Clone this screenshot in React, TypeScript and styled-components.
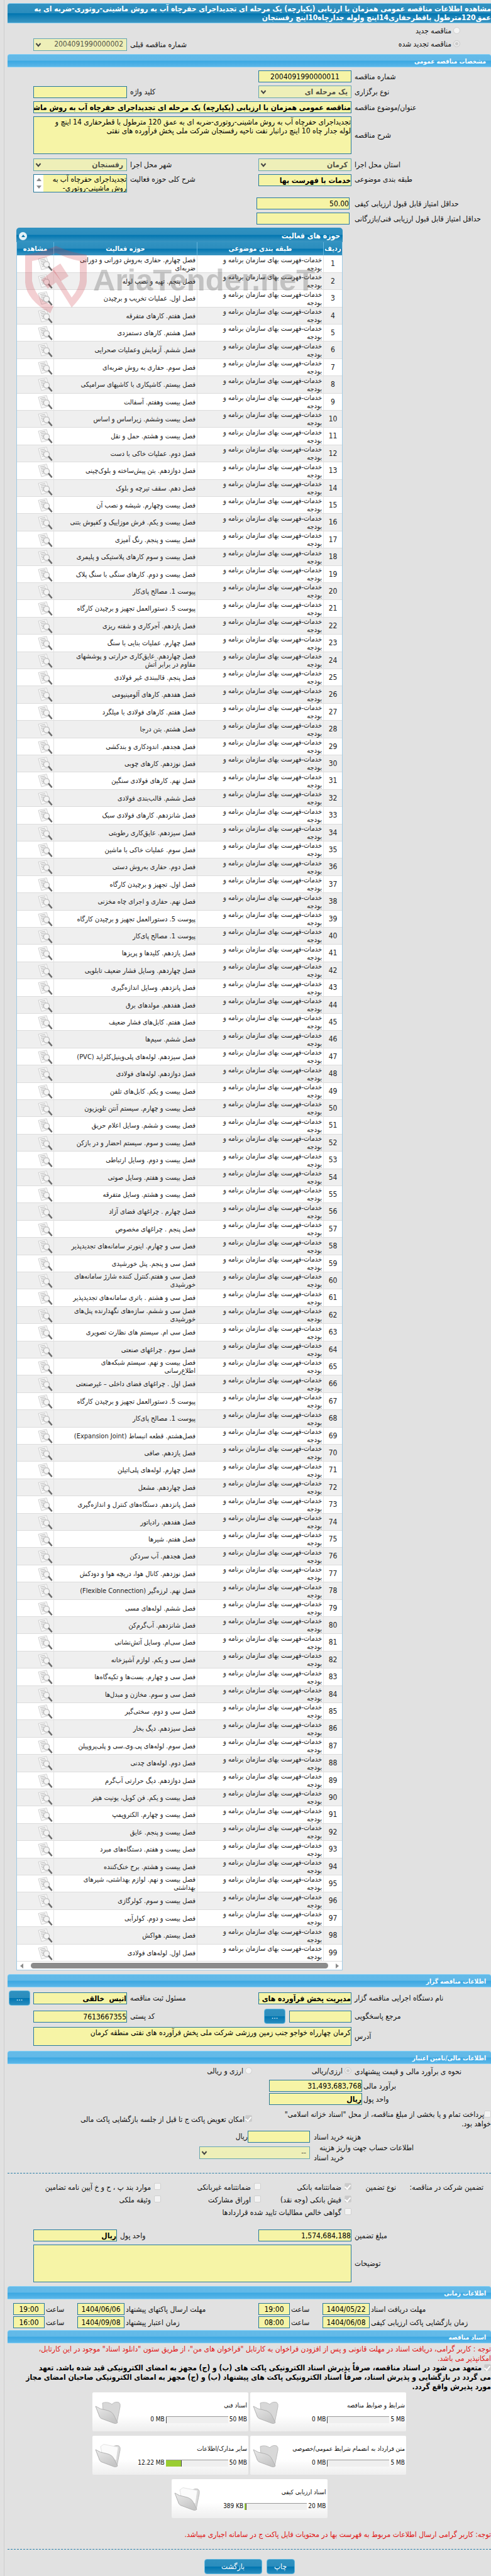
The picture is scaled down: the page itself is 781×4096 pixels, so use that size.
import React from 'react';
import styled, { createGlobalStyle } from 'styled-components';

const GlobalStyle = createGlobalStyle`
  * { box-sizing: border-box; }
  body {
    margin: 0;
    background: #e1e1e1;
    color: #111;
    font-family: "DejaVu Sans Condensed", "DejaVu Sans", sans-serif;
    font-size: 12px;
    line-height: 15px;
    overflow-x: hidden;
  }
  input, select, textarea, button { font: inherit; margin: 0; }
`;

const Page = styled.main`
  margin-left: 6px;
  padding-left: 5px;
  border-left: 1px solid #cdcdcd;
  padding-top: 5px;
  padding-bottom: 4px;
`;

const darkBar = 'linear-gradient(#3192c1 0, #2c8dbd 48%, #0176b1 52%, #3c96c2 100%)';

const PageTitle = styled.h1`
  margin: 0;
  padding: 1px 0;
  min-height: 31px;
  font-size: 12px;
  line-height: 14px;
  font-weight: bold;
  color: #fff;
  white-space: nowrap;
  background: ${darkBar};
  border-top: 1px solid #7cc9ee;
  border-bottom: 1px solid #7cc9ee;
  border-radius: 4px 0 0 0;
`;

const SectionTitle = styled.h2<{ $gap?: number }>`
  margin: ${p => p.$gap ?? 0}px 0 0;
  padding: 2px 8px 0;
  height: 21px;
  font-size: 10px;
  line-height: 18px;
  font-weight: bold;
  color: #fff;
  background: linear-gradient(#63bae8 0, #62b9e8 48%, #3ba8e2 52%, #5bb6e8 100%);
  border-top: 1px solid #85d0f6;
  border-bottom: 1px solid #85d0f6;
  border-radius: 4px 4px 0 0;
`;

const Stack = styled.div<{ $top?: number; $gap?: number }>`
  display: flex;
  flex-direction: column;
  margin-top: ${p => p.$top ?? 0}px;
  gap: ${p => p.$gap ?? 5}px;
`;

const FormRow = styled.div<{ $top?: number; $h?: number; $align?: string }>`
  display: grid;
  grid-template-columns: minmax(0, 217fr) 148px minmax(0, 199fr) 149px 36px;
  column-gap: 5px;
  align-items: ${p => p.$align ?? 'center'};
  min-height: ${p => p.$h ?? 19}px;
  margin-top: ${p => p.$top ?? 0}px;
`;

const AmountRow = styled(FormRow)`
  grid-template-columns: minmax(0, 217fr) 148px minmax(0, 215fr) 133px 36px;
`;

const EstimateRow = styled(FormRow)`
  grid-template-columns: minmax(0, 203fr) 148px minmax(0, 414fr);
  column-gap: 2px;
`;

const CurrencyRow = styled(FormRow)`
  grid-template-columns: minmax(0, 217fr) 153px minmax(0, 389fr);
`;

const TreasuryRow = styled(FormRow)`
  grid-template-columns: 375px minmax(0, 1fr);
`;

const CostRow = styled(FormRow)`
  grid-template-columns: minmax(0, 282fr) 176px minmax(0, 299fr);
  column-gap: 6px;
`;

const TimeRow = styled(FormRow)`
  grid-template-columns: minmax(0, 191fr) 75px 48px 50px minmax(0, 209fr) 75px 48px 50px 7px;
  column-gap: 2px;
`;

const Label = styled.label`
  text-align: left;
  padding-top: 1px;
`;

const TwoLineLabel = styled(Label)`
  justify-self: end;
  width: 159px;
  text-align: right;
`;

const fieldColors = `
  border: 1px solid #27799b;
  border-radius: 0;
  background: #f6f4a6;
  color: #000;
  outline: 0;
`;

const Field = styled.input<{ $bold?: boolean; $center?: boolean; $inset?: number }>`
  ${fieldColors}
  width: 100%;
  min-width: 0;
  height: 19px;
  padding: 1px 0 0;
  font-weight: ${p => (p.$bold ? 'bold' : 'normal')};
  text-align: ${p => (p.$center ? 'center' : 'right')};
  margin-right: ${p => p.$inset ?? 0}px;
`;

const WideField = styled(Field)`
  grid-column: 2 / 5;
`;

const Area = styled.textarea<{ $h: number; $wide?: boolean }>`
  ${fieldColors}
  display: block;
  width: 100%;
  min-width: 0;
  height: ${p => p.$h}px;
  padding: 1px 0 0;
  line-height: 14px;
  resize: none;
  overflow: hidden;
  grid-column: ${p => (p.$wide ? '2 / 5' : 'auto')};
`;

const ScrollBox = styled.div`
  ${fieldColors}
  display: flex;
  height: 29px;
  textarea { border: 0; height: 27px; flex: 1; padding: 0; }
`;

const Rail = styled.span`
  width: 15px;
  background: #fff;
  display: flex;
  flex-direction: column;
  align-items: center;
  justify-content: space-between;
  padding: 5px 0;
  i { border: 4px solid transparent; border-top: 0; border-bottom: 5px solid #8a8a8a; }
  i + i { border-top: 5px solid #8a8a8a; border-bottom: 0; }
`;

const SelectWrap = styled.span`
  position: relative;
  display: block;
  svg { position: absolute; left: 3px; top: 7px; }
`;

const SelectBox = styled.select`
  appearance: none;
  display: block;
  width: 100%;
  height: 20px;
  padding: 0 5px;
  border: 1px solid #67a5b1;
  border-radius: 0;
  background: #eeefb8;
  color: #55554a;
  opacity: 1;
  font-weight: bold;
  &.plain { font-weight: normal; }
`;

function Select({ id, value, plain }: { id: string; value: string; plain?: boolean }) {
  return (
    <SelectWrap>
      <SelectBox id={id} disabled className={plain ? 'plain' : ''}>
        <option>{value}</option>
      </SelectBox>
      <svg width="10" height="7" viewBox="0 0 10 7" fill="none" stroke="#444" strokeWidth="2">
        <path d="M1.5 1 5 5.2 8.5 1" />
      </svg>
    </SelectWrap>
  );
}

const Radio = styled.input.attrs({ type: 'radio', disabled: true })`
  appearance: none;
  flex: none;
  width: 11px;
  height: 11px;
  border-radius: 50%;
  border: 1px solid #cfcfcf;
  background: #f3f3f3;
  &:checked { background: #c9c9c9; box-shadow: inset 0 0 0 2px #ececec; }
`;

const Check = styled.input.attrs({ type: 'checkbox', disabled: true })`
  appearance: none;
  flex: none;
  display: inline-block;
  width: 11px;
  height: 11px;
  border-radius: 2px;
  border: 1px solid #d0d0d0;
  background: #f3f3f3;
  vertical-align: -1px;
  &:checked { background: #cacaca; }
  &:checked::after {
    content: '';
    display: block;
    width: 4px;
    height: 7px;
    margin: 0 2px 0 0;
    border: solid #fff;
    border-width: 0 2px 2px 0;
    transform: rotate(40deg);
  }
`;

const Choice = styled.label<{ $gap?: number; $wide?: boolean }>`
  display: flex;
  align-items: center;
  gap: ${p => p.$gap ?? 3}px;
  white-space: nowrap;
  grid-column: ${p => (p.$wide ? 'span 2' : 'auto')};
  input { margin-bottom: 3px; }
`;

const Option = styled(Choice)`
  padding-right: 49px;
`;

const TenderRow = styled.div`
  display: grid;
  grid-template-columns: minmax(0, 370fr) minmax(0, 199fr) 149px 36px;
  column-gap: 5px;
  align-items: center;
  height: 21px;
`;

const GuaranteeGrid = styled.div`
  display: grid;
  grid-template-columns: 139px 71px 144px 159px 1fr;
  grid-auto-rows: 20px;
  align-items: center;
  padding-right: 12px;
  margin-top: 12px;
  white-space: nowrap;
`;

const Divider = styled.hr`
  margin: 0;
  border: 0;
  border-top: 1px dashed #2b7fa8;
`;

const BlueButton = styled.button<{ $w: number }>`
  width: ${p => p.$w}px;
  height: 24px;
  padding: 0;
  border: 1px solid #62b9e0;
  border-radius: 4px;
  background: linear-gradient(#2f91c0 0, #2b8dbd 48%, #0176b1 52%, #2a8dbe 100%);
  color: #fff;
`;

const Contact = styled.span`
  display: flex;
  gap: 6px;
  align-items: center;
  input { width: 99px; }
`;

const Cost = styled(Contact)`
  gap: 0;
`;

const TableBox = styled.section`
  position: relative;
  margin: 5px 236px 0 14px;
  border: 1px solid #9fcbe6;
  border-top: 0;
  border-radius: 5px 5px 0 0;
  background: #fff;
`;

const TableBar = styled.div`
  display: flex;
  justify-content: space-between;
  align-items: center;
  height: 23px;
  padding: 3px 4px 0;
  margin: 0 -1px;
  border-radius: 5px 5px 0 0;
  color: #fff;
  font-weight: bold;
  background: ${darkBar};
`;

const Toggle = styled.button`
  width: 13px;
  height: 13px;
  padding: 0;
  border: 0;
  border-radius: 50%;
  background: #e4f1f8;
  display: grid;
  place-items: center;
  &::after { content: ''; border: 3px solid transparent; border-top: 0; border-bottom: 4px solid #1179ad; }
`;

const Table = styled.table`
  width: 100%;
  table-layout: fixed;
  border-spacing: 0;
  font-size: 11px;
  line-height: 13px;
  color: #222;
  th {
    height: 21px;
    padding: 0;
    color: #fff;
    background: ${darkBar};
    border-right: 1px solid #64b4dc;
  }
  th:first-child, td:first-child { border-right: 0; }
  th:nth-child(1) { width: 29px; }
  th:nth-child(2) { width: 201px; }
  th:nth-child(4) { width: 59px; }
  td {
    height: 27px;
    padding: 0 2px 0 10px;
    border-bottom: 1px solid #dcdcdc;
    border-right: 1px solid #e2e2e2;
    text-align: right;
    white-space: pre-line;
  }
  td:first-child { text-align: center; font-size: 12px; padding: 0; }
  td:nth-child(2) { padding-left: 24px; }
  td:last-child { padding: 0 1px; }
  tbody tr:nth-child(even) { background: #efefef; }
  tbody tr:nth-child(5n + 1) td, tbody tr:nth-child(5n + 3) td { height: 28px; }
  svg { display: block; }
`;

const HScroll = styled.div`
  display: flex;
  align-items: center;
  justify-content: space-between;
  height: 13px;
  padding: 0 5px;
  i { border: 4px solid transparent; border-right: 0; border-left: 5px solid #8a8a8a; }
  i:last-child { border-left: 0; border-right: 5px solid #8a8a8a; }
  span { flex: 1; margin: 0 12px; height: 9px; border-radius: 5px; background: #8b8b8b; }
`;

const Watermark = styled.div`
  position: absolute;
  left: 13px;
  top: 29px;
  display: flex;
  direction: ltr;
  pointer-events: none;
  span {
    margin: 26px 0 0 10px;
    font-family: "Liberation Sans", sans-serif;
    font-size: 49px;
    line-height: 56px;
    font-weight: bold;
    color: rgba(90, 90, 90, 0.3);
  }
`;

const Notice = styled.p<{ $top?: number }>`
  margin: ${p => p.$top ?? 0}px 0 0;
  color: #e01212;
`;

const Pledge = styled.label`
  display: block;
  font-weight: bold;
  color: #000;
`;

const Cards = styled.div`
  display: flex;
  flex-wrap: wrap;
  justify-content: center;
  gap: 7px 3px;
  width: 500px;
  margin: 1px auto 0;
`;

const Card = styled.article`
  display: flex;
  justify-content: space-between;
  width: 248px;
  height: 62px;
  padding: 13px 2px 0 4px;
  background: linear-gradient(#fff 60%, #eeeeee);
  border-radius: 2px;
  h3 { margin: 0; font-size: 10px; line-height: 15px; font-weight: normal; white-space: nowrap; }
`;

const Quota = styled.div`
  display: flex;
  align-items: center;
  gap: 2px;
  margin-top: 8px;
  font-size: 10px;
  line-height: 14px;
  white-space: nowrap;
`;

const Meter = styled.span`
  display: flex;
  direction: ltr;
  width: 99px;
  height: 11px;
  background: #efefef;
  border-top: 1px solid #999;
  i { background: #9acd32; border-right: 1px solid #444; }
`;

const Actions = styled.div`
  display: flex;
  justify-content: center;
  gap: 7px;
  margin-top: 15px;
`;

const DocIcon = () => (
  <svg width="24" height="23" viewBox="0 0 24 23">
    <path d="M1 3.5 14 .8 19 17.5 6 21Z" fill="#f7f7f7" stroke="#c9c9c9" strokeWidth=".8" />
    <path d="M4 5.5l8-1.6M4.8 8l8.4-1.7M5.4 10.500l5-1M6 13l4-.8M6.800 15.500l4-.8" stroke="#b5b5b5" strokeWidth="1" fill="none" />
    <circle cx="14" cy="12.500" r="4.600" fill="#f4f4f4" fillOpacity=".85" stroke="#b9b9b9" strokeWidth="1.200" />
    <path d="M17.800 16.300 22 21.300" stroke="#6d6d6d" strokeWidth="2.600" strokeLinecap="round" />
  </svg>
);

const Folder = ({ full }: { full?: boolean }) => (
  <svg width="42" height="38" viewBox="0 0 42 38">
    <defs>
      <linearGradient id="fold" x1="0" y1="0" x2="0.6" y2="1">
        <stop offset="0" stopColor="#e9e9e9" />
        <stop offset="1" stopColor="#c6c6c6" />
      </linearGradient>
    </defs>
    <path d="M12 4 Q20 1 27 6 Q32 1 38 3 Q41 5 40 10 L35 35 L14 28Z" fill="#d8d8d8" stroke="#bdbdbd" />
    {full && <path d="M9 4 14 .6 37 5 34 26 12 20Z" fill="#fbfbfb" stroke="#dcdcdc" strokeWidth=".8" />}
    <path d="M1 9 Q8 14 17 15 Q28 17 31 25 L36 35 Q34 37.500 30 36 L10 28.500 Q7 27 6 22Z" fill="url(#fold)" stroke="#b2b2b2" />
  </svg>
);

const Shield = () => (
  <svg width="98" height="107" viewBox="0 0 98 107">
    <g fill="#d0404a" fillOpacity=".25">
      <path d="M0 14 Q28 10 49 0 Q70 10 98 14 V56 Q97 74 74 98 L49 58 36 68 26 54 46 38 74 82 Q86 68 87 54 V24 Q66 20 49 11 Q32 20 11 24 V56 Q15 76 30 88 L45 96 40 107 Q2 86 0 58Z" />
      <path d="M42 37 56 28 69 48 57 56Z" />
    </g>
  </svg>
);

const category = 'خدمات-فهرست بهای سازمان برنامه و بودجه';

const activities = [
  'فصل چهارم. حفاری به‌روش دورانی و دورانی ضربه‌ای',
  'فصل پنجم. تهیه و نصب لوله',
  'فصل اول. عملیات تخریب و برچیدن',
  'فصل هفتم. کارهای متفرقه',
  'فصل هشتم. کارهای دستمزدی',
  'فصل ششم. آزمایش وعملیات صحرایی',
  'فصل سوم. حفاری به روش ضربه‌ای',
  'فصل بیستم. کاشیکاری با کاشیهای سرامیکی',
  'فصل بیست وهفتم. آسفالت',
  'فصل بیست وششم. زیراساس و اساس',
  'فصل بیست و هشتم. حمل و نقل',
  'فصل دوم. عملیات خاکی با دست',
  'فصل دوازدهم. بتن پیش‌ساخته و بلوک‌چینی',
  'فصل دهم. سقف تیرچه و بلوک',
  'فصل بیست وچهارم. شیشه و نصب آن',
  'فصل بیست و یکم. فرش موزاییک و کفپوش بتنی',
  'فصل بیست و پنجم. رنگ آمیزی',
  'فصل بیست و سوم کارهای پلاستیکی و پلیمری',
  'فصل بیست و دوم. کارهای سنگی با سنگ پلاک',
  'پیوست 1. مصالح پای‌کار',
  'پیوست 5. دستورالعمل تجهیز و برچیدن کارگاه',
  'فصل یازدهم. آجرکاری و شفته ریزی',
  'فصل چهارم. عملیات بنایی با سنگ',
  'فصل چهاردهم. عایق‌کاری حرارتی و پوششهای مقاوم در برابر آتش',
  'فصل پنجم. قالببندی غیر فولادی',
  'فصل هفدهم. کارهای آلومینیومی',
  'فصل هفتم. کارهای فولادی با میلگرد',
  'فصل هشتم. بتن درجا',
  'فصل هجدهم. اندودکاری و بندکشی',
  'فصل نوزدهم. کارهای چوبی',
  'فصل نهم. کارهای فولادی سنگین',
  'فصل ششم. قالب‌بندی فولادی',
  'فصل شانزدهم. کارهای فولادی سبک',
  'فصل سیزدهم. عایق‌کاری رطوبتی',
  'فصل سوم. عملیات خاکی با ماشین',
  'فصل دوم. حفاری به‌روش دستی',
  'فصل اول. تجهیز و برچیدن کارگاه',
  'فصل نهم. حفاری و اجرای چاه مخزنی',
  'پیوست 5. دستورالعمل تجهیز و برچیدن کارگاه',
  'پیوست 1. مصالح پای‌کار',
  'فصل یازدهم. کلیدها و پریزها',
  'فصل چهاردهم. وسایل فشار ضعیف تابلویی',
  'فصل پانزدهم. وسایل اندازه‌گیری',
  'فصل هفدهم. مولدهای برق',
  'فصل هفتم. کابل‌های فشار ضعیف',
  'فصل ششم. سیم‌ها',
  'فصل سیزدهم. لوله‌های پلی‌وینیل‌کلراید (PVC)',
  'فصل دوازدهم. لوله‌های فولادی',
  'فصل بیست و یکم. کابل‌های تلفن',
  'فصل بیست و چهارم. سیستم آنتن تلویزیون',
  'فصل بیست و ششم. وسایل اعلام حریق',
  'فصل بیست و سوم. سیستم احضار و در بازکن',
  'فصل بیست و دوم. وسایل ارتباطی',
  'فصل بیست و هفتم. وسایل صوتی',
  'فصل بیست و هشتم. وسایل متفرقه',
  'فصل چهارم . چراغهای فضای آزاد',
  'فصل پنجم . چراغهای مخصوص',
  'فصل سی و چهارم. اینورتر سامانه‌های تجدیدپذیر',
  'فصل سی و پنجم. پنل خورشیدی',
  'فصل سی و هفتم.کنترل کننده شارژ سامانه‌های خورشیدی',
  'فصل سی و هشتم . باتری سامانه‌های تجدیدپذیر',
  'فصل سی و ششم. سازه‌های نگهدارنده پنل‌های خورشیدی',
  'فصل سی ام. سیستم های نظارت تصویری',
  'فصل سوم . چراغهای صنعتی',
  'فصل بیست و نهم. سیستم شبکه‌های\nاطلاع‌رسانی',
  'فصل اول . چراغهای فضای داخلی – غیرصنعتی',
  'پیوست 5. دستورالعمل تجهیز و برچیدن کارگاه',
  'پیوست 1. مصالح پای‌کار',
  'فصل‌هشتم. قطعه انبساط (Expansion Joint)',
  'فصل یازدهم. صافی',
  'فصل چهارم. لوله‌های پلی‌اتیلن',
  'فصل چهاردهم. مشعل',
  'فصل پانزدهم. دستگاه‌های کنترل و اندازه‌گیری',
  'فصل هفدهم. رادیاتور',
  'فصل هفتم. شیرها',
  'فصل هجدهم. آب سردکن',
  'فصل نوزدهم. کانال هوا، دریچه هوا و دودکش',
  'فصل نهم. لرزه‌گیر (Flexible Connection)',
  'فصل ششم. لوله‌های مسی',
  'فصل شانزدهم. آب‌گرم‌کن',
  'فصل سی‌ام. وسایل آتش‌نشانی',
  'فصل سی و یکم. لوازم آشپزخانه',
  'فصل سی و چهارم. بست‌ها و تکیه‌گاه‌ها',
  'فصل سی و سوم. مخازن و مبدل‌ها',
  'فصل سی و دوم. سختی‌گیر',
  'فصل سیزدهم. دیگ بخار',
  'فصل سوم. لوله‌های پی.وی.سی و پلی‌پروپیلن',
  'فصل دوم. لوله‌های چدنی',
  'فصل دوازدهم. دیگ حرارتی آب‌گرم',
  'فصل بیست و یکم. فن کویل، یونیت هیتر',
  'فصل بیست و چهارم. الکتروپمپ',
  'فصل بیست و پنجم. عایق',
  'فصل بیست و هفتم. دستگاه‌های مبرد',
  'فصل بیست و هشتم. برج خنک‌کننده',
  'فصل بیست و نهم. لوازم بهداشتی، شیرهای\nبهداشتی',
  'فصل بیست و سوم. کولرگازی',
  'فصل بیست و دوم. کولرآبی',
  'فصل بیستم. هواکش',
  'فصل اول. لوله‌های فولادی',
];

const documents = [
  { title: 'شرایط و ضوابط مناقصه', used: '0 MB', total: '5 MB', share: 0, full: false },
  { title: 'اسناد فنی', used: '0 MB', total: '50 MB', share: 0, full: false },
  { title: 'متن قرارداد به انضمام شرایط عمومی/خصوصی', used: '0 MB', total: '5 MB', share: 0, full: false },
  { title: 'سایر مدارک/اطلاعات', used: '12.22 MB', total: '50 MB', share: 25, full: true },
  { title: 'اسناد ارزیابی کیفی', used: '389 KB', total: '20 MB', share: 3, full: true },
];

export default function App() {
  return (
    <Page dir="rtl">
      <GlobalStyle />
      <PageTitle>
        مشاهده اطلاعات مناقصه عمومی همزمان با ارزیابی (یکپارچه) یک مرحله ای تجدیداجرای حفرچاه آب به روش ماشینی-روتوری-ضربه ای به
        <br />
        عمق120مترطول باقطرحفاری14اینچ ولوله جدارچاه10اینچ رفسنجان
      </PageTitle>

      <Stack $top={2} $gap={0}>
        <TenderRow>
          <Option><Radio name="kind" />مناقصه جدید</Option>
        </TenderRow>
        <TenderRow>
          <Option><Radio name="kind" defaultChecked />مناقصه تجدید شده</Option>
          <Label htmlFor="prev">شماره مناقصه قبلی</Label>
          <Select id="prev" value="2004091990000002" plain />
        </TenderRow>
      </Stack>

      <SectionTitle $gap={5}>مشخصات مناقصه عمومی</SectionTitle>
      <Stack $top={5}>
        <FormRow>
          <Label htmlFor="no">شماره مناقصه</Label>
          <Field id="no" readOnly $center defaultValue="2004091990000011" />
        </FormRow>
        <FormRow $h={20}>
          <Label htmlFor="type">نوع برگزاری</Label>
          <Select id="type" value="یک مرحله ای" />
          <Label htmlFor="key">کلید واژه</Label>
          <Field id="key" readOnly />
        </FormRow>
        <FormRow>
          <Label htmlFor="subject">عنوان/موضوع مناقصه</Label>
          <WideField id="subject" readOnly $bold defaultValue="مناقصه عمومی همزمان با ارزیابی (یکپارچه) یک مرحله ای تجدیداجرای حفرچاه آب به روش ماشینی-روتوری-ضربه ای به عمق120مترطول" />
        </FormRow>
        <FormRow $h={60}>
          <Label htmlFor="desc">شرح مناقصه</Label>
          <Area id="desc" readOnly $h={60} $wide defaultValue={'تجدیداجرای حفرچاه آب به روش ماشینی-روتوری-ضربه ای به عمق 120 مترطول با قطرحفاری 14 اینچ و\nلوله جدار چاه 10 اینچ درانبار نفت ناحیه رفسنجان شرکت ملی پخش فرآورده های نفتی'} />
        </FormRow>
        <FormRow $h={20} $top={2}>
          <Label htmlFor="province">استان محل اجرا</Label>
          <Select id="province" value="کرمان" />
          <Label htmlFor="city">شهر محل اجرا</Label>
          <Select id="city" value="رفسنجان" />
        </FormRow>
        <FormRow $h={29} $align="start">
          <Label htmlFor="cat">طبقه بندی موضوعی</Label>
          <Field id="cat" readOnly $bold defaultValue="خدمات با فهرست بها" />
          <Label htmlFor="scope">شرح کلی حوزه فعالیت</Label>
          <ScrollBox>
            <Area id="scope" readOnly $h={27} defaultValue={'تجدیداجرای حفرچاه آب به\nروش ماشینی-روتوری-'} />
            <Rail><i /><i /></Rail>
          </ScrollBox>
        </FormRow>
        <FormRow $top={3}>
          <Label htmlFor="minq">حداقل امتیاز قابل قبول ارزیابی کیفی</Label>
          <Field id="minq" readOnly $inset={3} defaultValue="50.00" />
        </FormRow>
        <FormRow>
          <Label htmlFor="mint">حداقل امتیاز قابل قبول ارزیابی فنی/بازرگانی</Label>
          <Field id="mint" readOnly $inset={3} />
        </FormRow>
      </Stack>

      <TableBox>
        <TableBar>
          <span>حوزه های فعالیت</span>
          <Toggle aria-label="بستن" />
        </TableBar>
        <Table>
          <thead>
            <tr>
              <th>ردیف</th>
              <th>طبقه بندی موضوعی</th>
              <th>حوزه فعالیت</th>
              <th>مشاهده</th>
            </tr>
          </thead>
          <tbody>
            {activities.map((name, i) => (
              <tr key={i}>
                <td>{i + 1}</td>
                <td>{category}</td>
                <td>{name}</td>
                <td><DocIcon /></td>
              </tr>
            ))}
          </tbody>
        </Table>
        <HScroll><i /><span /><i /></HScroll>
        <Watermark aria-hidden="true">
          <Shield />
          <span>AriaTender.neT</span>
        </Watermark>
      </TableBox>

      <SectionTitle $gap={6}>اطلاعات مناقصه گزار</SectionTitle>
      <Stack $top={5}>
        <FormRow $h={24}>
          <Label htmlFor="org">نام دستگاه اجرایی مناقصه گزار</Label>
          <Field id="org" readOnly $bold defaultValue="مدیریت پخش فرآورده های نفتی منطقه کرمان" />
          <Label htmlFor="owner">مسئول ثبت مناقصه</Label>
          <Field id="owner" readOnly $bold defaultValue="انیس  خالقی" />
          <BlueButton $w={34}>...</BlueButton>
        </FormRow>
        <FormRow $h={24}>
          <Label htmlFor="ref">مرجع پاسخگویی</Label>
          <Contact>
            <Field id="ref" readOnly />
            <BlueButton $w={34}>...</BlueButton>
          </Contact>
          <Label htmlFor="zip">کد پستی</Label>
          <Field id="zip" readOnly defaultValue="7613667355" />
        </FormRow>
        <FormRow $h={30}>
          <Label htmlFor="addr">آدرس</Label>
          <Area id="addr" readOnly $h={30} $wide defaultValue="کرمان چهارراه خواجو جنب زمین ورزشی شرکت ملی پخش فرآورده های نفتی منطقه کرمان" />
        </FormRow>
      </Stack>

      <SectionTitle $gap={8}>اطلاعات مالی/تامین اعتبار</SectionTitle>
      <CurrencyRow $top={2}>
        <Label as="span">نحوه ی برآورد مالی و قیمت پیشنهادی</Label>
        <Choice><Radio name="cur" defaultChecked />ارزی/ریالی</Choice>
        <Choice><Radio name="cur" />ارزی و ریالی</Choice>
      </CurrencyRow>
      <Stack $top={4} $gap={2}>
        <EstimateRow>
          <Label htmlFor="est">برآورد مالی</Label>
          <Field id="est" readOnly defaultValue="31,493,683,768" />
        </EstimateRow>
        <EstimateRow>
          <Label htmlFor="unit1">واحد پول</Label>
          <Field id="unit1" readOnly $bold defaultValue="ریال" />
        </EstimateRow>
      </Stack>
      <TreasuryRow $top={8}>
        <label><Check />پرداخت تمام و یا بخشی از مبلغ مناقصه، از محل "اسناد خزانه اسلامی"<br />خواهد بود.</label>
        <Choice $gap={1}><Check defaultChecked />امکان تعویض پاکت ج تا قبل از جلسه بازگشایی پاکت مالی</Choice>
      </TreasuryRow>
      <CostRow $top={3}>
        <Label htmlFor="cost">هزینه خرید اسناد</Label>
        <Cost><Field id="cost" readOnly />ریال</Cost>
      </CostRow>
      <CostRow $h={30}>
        <TwoLineLabel htmlFor="acc">اطلاعات حساب جهت واریز هزینه<Label as="div">خرید اسناد</Label></TwoLineLabel>
        <Select id="acc" value="--" plain />
      </CostRow>

      <Stack $top={16}><Divider /></Stack>
      <GuaranteeGrid>
        <span>تضمین شرکت در مناقصه:</span>
        <span>نوع تضمین</span>
        <Choice $gap={5}><Check defaultChecked />ضمانتنامه بانکی</Choice>
        <Choice $gap={5}><Check />ضمانتنامه غیربانکی</Choice>
        <Choice $gap={5}><Check />موارد بند پ ، ح و خ آیین نامه تضامین</Choice>
        <span />
        <span />
        <Choice $gap={5}><Check defaultChecked />فیش بانکی (وجه نقد)</Choice>
        <Choice $gap={5}><Check />اوراق مشارکت</Choice>
        <Choice $gap={5}><Check />وثیقه ملکی</Choice>
        <span />
        <span />
        <Choice $gap={5} $wide><Check />گواهی خالص مطالبات تایید شده قراردادها</Choice>
      </GuaranteeGrid>
      <Stack $top={17}>
        <AmountRow>
          <Label htmlFor="sum">مبلغ تضمین</Label>
          <Field id="sum" readOnly defaultValue="1,574,684,188" />
          <Label htmlFor="unit2">واحد پول</Label>
          <Field id="unit2" readOnly $bold defaultValue="ریال" />
        </AmountRow>
        <FormRow $h={60}>
          <Label htmlFor="notes">توضیحات</Label>
          <Area id="notes" readOnly $h={60} $wide />
        </FormRow>
      </Stack>

      <SectionTitle $gap={6}>اطلاعات زمانی</SectionTitle>
      <Stack $top={6} $gap={2}>
        <TimeRow>
          <Label htmlFor="d1">مهلت دریافت اسناد</Label>
          <Field id="d1" readOnly $center defaultValue="1404/05/22" />
          <Label htmlFor="h1">ساعت</Label>
          <Field id="h1" readOnly $center defaultValue="19:00" />
          <Label htmlFor="d2">مهلت ارسال پاکتهای پیشنهاد</Label>
          <Field id="d2" readOnly $center defaultValue="1404/06/06" />
          <Label htmlFor="h2">ساعت</Label>
          <Field id="h2" readOnly $center defaultValue="19:00" />
        </TimeRow>
        <TimeRow>
          <Label htmlFor="d3">زمان بازگشایی پاکت ارزیابی کیفی</Label>
          <Field id="d3" readOnly $center defaultValue="1404/06/08" />
          <Label htmlFor="h3">ساعت</Label>
          <Field id="h3" readOnly $center defaultValue="08:00" />
          <Label htmlFor="d4">زمان اعتبار پیشنهاد</Label>
          <Field id="d4" readOnly $center defaultValue="1404/09/08" />
          <Label htmlFor="h4">ساعت</Label>
          <Field id="h4" readOnly $center defaultValue="16:00" />
        </TimeRow>
      </Stack>

      <SectionTitle $gap={3}>اسناد مناقصه</SectionTitle>
      <Notice $top={2}>
        توجه : کاربر گرامی، دریافت اسناد در مهلت قانونی و پس از افزودن فراخوان به کارتابل "فراخوان های من"، از طریق ستون "دانلود اسناد" موجود در این کارتابل،
        <br />
        امکانپذیر می باشد.
      </Notice>
      <Pledge>
        <Check defaultChecked /> متعهد می شود در اسناد مناقصه، صرفاً پذیرش اسناد الکترونیکی پاکت های (ب) و (ج) مجهز به امضای الکترونیکی قید شده باشد. تعهد
        <br />
        می گردد در بازگشایی و پذیرش اسناد، صرفاً اسناد الکترونیکی پاکت های پیشنهاد (ب) و (ج) مجهز به امضای الکترونیکی صاحبان امضای مجاز
        <br />
        مورد پذیرش واقع گردد.
      </Pledge>
      <Cards>
        {documents.map(doc => (
          <Card key={doc.title}>
            <div>
              <h3>{doc.title}</h3>
              <Quota>
                <span dir="ltr">{doc.total}</span>
                <Meter><i style={{ width: `${doc.share}%` }} /></Meter>
                <span dir="ltr">{doc.used}</span>
              </Quota>
            </div>
            <Folder full={doc.full} />
          </Card>
        ))}
      </Cards>
      <Notice $top={19}>توجه: کاربر گرامی ارسال اطلاعات مربوط به فهرست بها در محتویات فایل پاکت ج در سامانه اجباری میباشد.</Notice>
      <Stack $top={15}><Divider /></Stack>
      <Actions>
        <BlueButton $w={45}>چاپ</BlueButton>
        <BlueButton $w={92}>بازگشت</BlueButton>
      </Actions>
    </Page>
  );
}
